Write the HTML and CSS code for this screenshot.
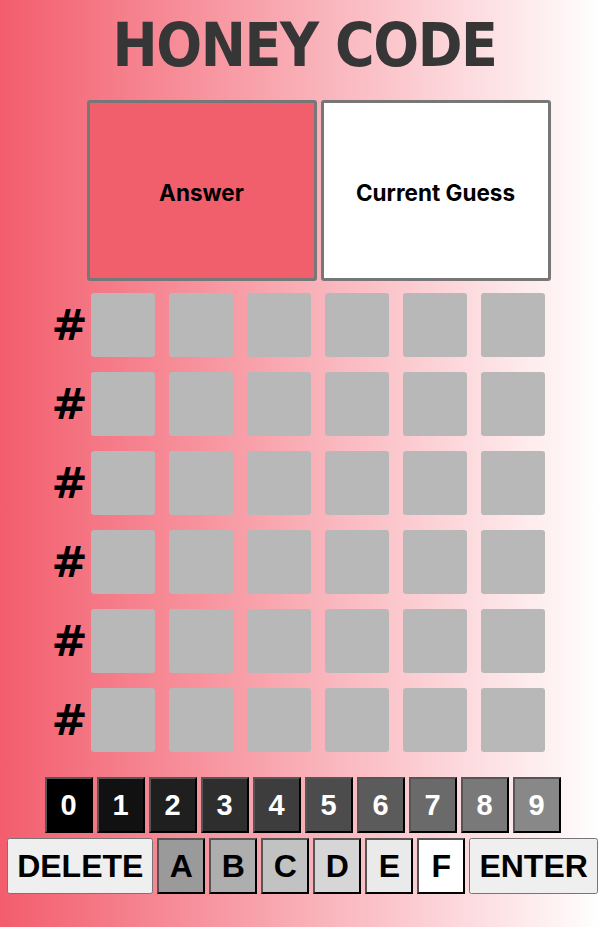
FILE: index.html
```html
<!DOCTYPE html>
<html>
<head>
<meta charset="utf-8">
<link rel="stylesheet" href="styles.css">
</head>
<body>
<h1 class="title">HONEY CODE</h1>
<div class="board">
  <div class="panels">
    <div class="panel panel-answer">Answer</div>
    <div class="panel panel-guess">Current Guess</div>
  </div>
  <div class="row"><span class="hash">#</span><div class="tile"></div><div class="tile"></div><div class="tile"></div><div class="tile"></div><div class="tile"></div><div class="tile"></div></div>
  <div class="row"><span class="hash">#</span><div class="tile"></div><div class="tile"></div><div class="tile"></div><div class="tile"></div><div class="tile"></div><div class="tile"></div></div>
  <div class="row"><span class="hash">#</span><div class="tile"></div><div class="tile"></div><div class="tile"></div><div class="tile"></div><div class="tile"></div><div class="tile"></div></div>
  <div class="row"><span class="hash">#</span><div class="tile"></div><div class="tile"></div><div class="tile"></div><div class="tile"></div><div class="tile"></div><div class="tile"></div></div>
  <div class="row"><span class="hash">#</span><div class="tile"></div><div class="tile"></div><div class="tile"></div><div class="tile"></div><div class="tile"></div><div class="tile"></div></div>
  <div class="row"><span class="hash">#</span><div class="tile"></div><div class="tile"></div><div class="tile"></div><div class="tile"></div><div class="tile"></div><div class="tile"></div></div>
</div>
<div class="keyboard">
  <div class="keys">
    <button class="key digit d0">0</button>
    <button class="key digit d1">1</button>
    <button class="key digit d2">2</button>
    <button class="key digit d3">3</button>
    <button class="key digit d4">4</button>
    <button class="key digit d5">5</button>
    <button class="key digit d6">6</button>
    <button class="key digit d7">7</button>
    <button class="key digit d8">8</button>
    <button class="key digit d9">9</button>
  </div>
  <div class="keys">
    <button class="wide">DELETE</button>
    <button class="key letter la">A</button>
    <button class="key letter lb">B</button>
    <button class="key letter lc">C</button>
    <button class="key letter ld">D</button>
    <button class="key letter le">E</button>
    <button class="key letter lf">F</button>
    <button class="wide">ENTER</button>
  </div>
</div>
</body>
</html>
```

FILE: styles.css
```css
html {
  min-height: 100%;
  background: linear-gradient(to right, #f35d6d 0%, #ffffff 100%);
}
body {
  margin: 0;
  min-height: 927px;
}
.title {
  margin: 0;
  padding-top: 13px;
  padding-left: 6px;
  height: 64px;
  line-height: 64px;
  text-align: center;
  font-family: "DejaVu Sans Condensed", "DejaVu Sans", sans-serif;
  font-weight: bold;
  font-size: 60px;
  letter-spacing: -1.4px;
  color: #363636;
}
.board {
  width: 500px;
  margin: 23px auto 0;
  display: flex;
  flex-direction: column;
}
.panels {
  margin-left: 32px;
  padding: 0 1px 0 3px;
  display: flex;
  gap: 4px;
  margin-bottom: 4px;
}
.panel {
  box-sizing: border-box;
  width: 230px;
  height: 181px;
  border: 3px solid #777;
  border-radius: 3px;
  display: flex;
  align-items: center;
  justify-content: center;
  padding-top: 3px;
  font-family: Inter, "Noto Sans", sans-serif;
  font-weight: 700;
  font-size: 22.5px;
  color: #000;
}
.panel-answer { background: #f15f6d; }
.panel-guess { background: #ffffff; }
.row {
  display: flex;
  align-items: center;
  height: 79px;
}
.hash {
  width: 32px;
  text-align: center;
  font-family: "DejaVu Sans", sans-serif;
  font-weight: 700;
  font-size: 43px;
  line-height: 48px;
  color: #000;
}
.tile {
  width: 64px;
  height: 64px;
  margin: 0 7px;
  background: #b8b8b8;
  border-radius: 3px;
}
.keyboard {
  margin-top: 18px;
  padding-left: 2px;
  display: flex;
  flex-direction: column;
  align-items: center;
  gap: 5px;
}
.keys {
  display: flex;
  gap: 4px;
  justify-content: center;
}
.key {
  box-sizing: border-box;
  width: 48px;
  height: 56px;
  padding: 0;
  border: 2px outset #555;
  font-family: "Liberation Sans", Arial, sans-serif;
  font-weight: bold;
}
.digit {
  font-size: 29px;
  color: #fff;
}
.letter {
  font-size: 32px;
  color: #000;
}
.wide {
  height: 56px;
  padding: 0 8px;
  font-family: "Liberation Sans", Arial, sans-serif;
  font-weight: bold;
  font-size: 32px;
  color: #000;
}
.d0 { background: #000000; }
.d1 { background: #111111; }
.d2 { background: #1f1f1f; }
.d3 { background: #2e2e2e; }
.d4 { background: #3d3d3d; }
.d5 { background: #4c4c4c; }
.d6 { background: #5b5b5b; }
.d7 { background: #6a6a6a; }
.d8 { background: #797979; }
.d9 { background: #888888; }
.la { background: #9a9a9a; }
.lb { background: #aeaeae; }
.lc { background: #c2c2c2; }
.ld { background: #d6d6d6; }
.le { background: #eaeaea; }
.lf { background: #ffffff; }
```
